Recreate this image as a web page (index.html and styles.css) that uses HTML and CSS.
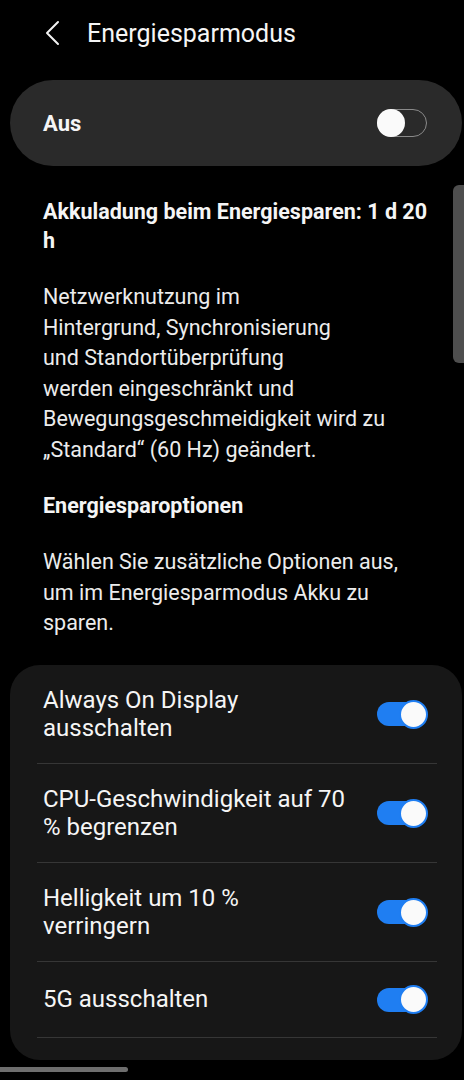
FILE: index.html
```html
<!DOCTYPE html>
<html lang="de">
<head>
<meta charset="utf-8">
<title>Energiesparmodus</title>
<link rel="stylesheet" href="styles.css">
</head>
<body>
<div class="screen">
  <header class="header">
    <svg class="back" width="20" height="28" viewBox="0 0 20 28">
      <path d="M15 3 L4 14 L15 25" fill="none" stroke="#f2f2f2" stroke-width="2" stroke-linecap="round" stroke-linejoin="round"/>
    </svg>
    <h1 class="title">Energiesparmodus</h1>
  </header>

  <div class="master">
    <span class="master-label">Aus</span>
    <span class="switch off"><span class="thumb"></span></span>
  </div>

  <div class="scrollbar"></div>

  <section class="info">
    <p class="bold">Akkuladung beim Energiesparen: 1 d 20<br>h</p>
    <p class="desc">Netzwerknutzung im<br>Hintergrund, Synchronisierung<br>und Standortüberprüfung<br>werden eingeschränkt und<br>Bewegungsgeschmeidigkeit wird zu<br>„Standard“ (60 Hz) geändert.</p>
    <p class="bold sub">Energiesparoptionen</p>
    <p class="desc">Wählen Sie zusätzliche Optionen aus,<br>um im Energiesparmodus Akku zu<br>sparen.</p>
  </section>

  <div class="options">
    <div class="row">
      <span class="row-label">Always On Display<br>ausschalten</span>
      <span class="switch on"><span class="thumb"></span></span>
    </div>
    <div class="row">
      <span class="row-label">CPU-Geschwindigkeit auf 70<br>% begrenzen</span>
      <span class="switch on"><span class="thumb"></span></span>
    </div>
    <div class="row">
      <span class="row-label">Helligkeit um 10 %<br>verringern</span>
      <span class="switch on"><span class="thumb"></span></span>
    </div>
    <div class="row single">
      <span class="row-label">5G ausschalten</span>
      <span class="switch on"><span class="thumb"></span></span>
    </div>
  </div>

  <div class="navbar"></div>
</div>
</body>
</html>
```
FILE: styles.css
```css
* { box-sizing: border-box; }
html, body {
  margin: 0;
  padding: 0;
  background: #000;
}
body {
  font-family: Roboto, "Noto Sans", "Liberation Sans", sans-serif;
  color: #f5f5f5;
  width: 464px;
  height: 1080px;
  overflow: hidden;
}
.screen {
  position: relative;
  height: 1080px;
}
.header {
  height: 66px;
  display: flex;
  align-items: center;
  padding-left: 43px;
}
.back {
  display: block;
  margin-right: 24px;
}
.title {
  margin: 0;
  font-size: 25px;
  font-weight: 400;
  color: #f5f5f5;
}
.master {
  margin: 14px 2px 0 10px;
  height: 86px;
  border-radius: 43px;
  background: #2a2a2a;
  display: flex;
  align-items: center;
  justify-content: space-between;
  padding: 0 35px 0 33px;
}
.master-label {
  font-size: 22px;
  font-weight: 700;
}
.switch {
  position: relative;
  width: 50px;
  height: 28px;
  border-radius: 14px;
  flex: none;
}
.switch .thumb {
  position: absolute;
  border-radius: 50%;
  background: #fafafa;
}
.switch.off {
  border: 1.5px solid #8a8a8a;
}
.switch.off .thumb {
  top: -1.5px;
  left: -1.5px;
  width: 28px;
  height: 28px;
}
.switch.on {
  height: 24px;
  border-radius: 12px;
  background: #1f7ef2;
}
.switch.on .thumb {
  top: -2.5px;
  right: -1px;
  width: 29px;
  height: 29px;
  border: 2px solid #1f7ef2;
}
.scrollbar {
  position: absolute;
  right: 0;
  top: 185px;
  width: 11px;
  height: 178px;
  border-radius: 6px 0 0 6px;
  background: #4e4e4e;
}
.info {
  padding: 31px 20px 0 43px;
}
.info p {
  margin: 0;
  white-space: nowrap;
}
.bold {
  font-size: 21.5px;
  font-weight: 700;
  line-height: 29px;
}
.desc {
  font-size: 21.5px;
  line-height: 30.5px;
  color: #ececec;
  margin-top: 27px !important;
}
.sub {
  margin-top: 26px !important;
}
.options {
  margin: 26px 2px 0 10px;
  background: #171717;
  border-radius: 30px;
  padding-bottom: 22px;
}
.row {
  position: relative;
  display: flex;
  align-items: center;
  justify-content: space-between;
  padding: 20px 35px 20px 33px;
  min-height: 99px;
}
.row::after {
  content: "";
  position: absolute;
  left: 27px;
  right: 25px;
  bottom: 0;
  height: 1px;
  background: #363636;
}
.row.single {
  min-height: 76px;
}
.row-label {
  font-size: 24px;
  line-height: 28.5px;
  font-weight: 400;
  color: #f5f5f5;
  white-space: nowrap;
}
.navbar {
  position: absolute;
  left: 0;
  top: 1067px;
  width: 128px;
  height: 5px;
  border-radius: 0 3px 3px 0;
  background: #6e6e6e;
}
```
